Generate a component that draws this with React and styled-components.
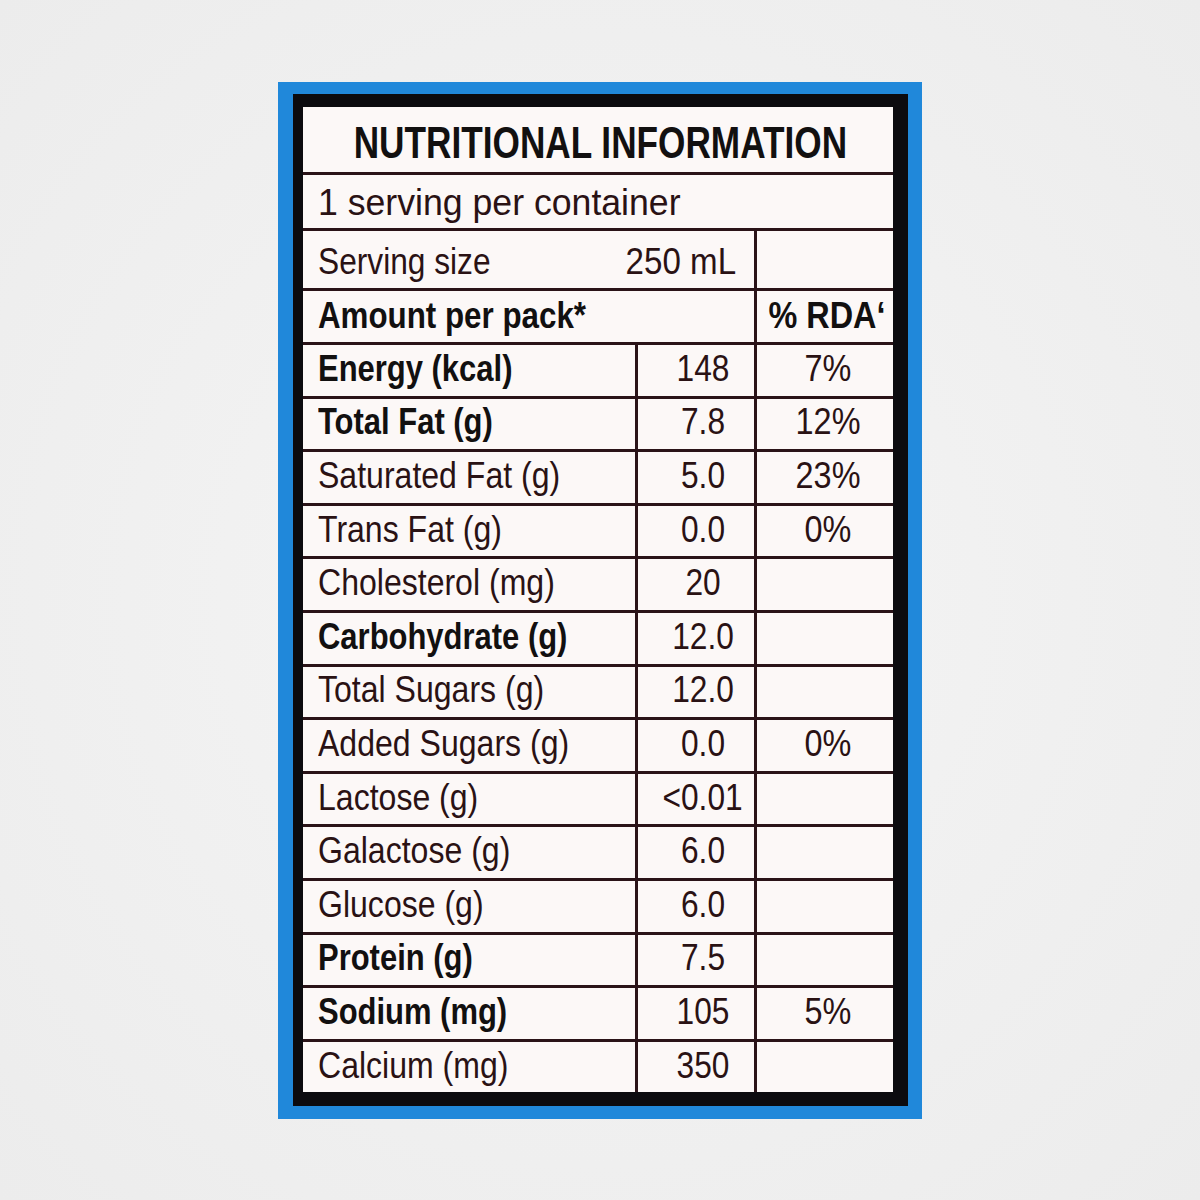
import React from "react";
import styled, { createGlobalStyle } from "styled-components";

const Global = createGlobalStyle`
  html, body { margin: 0; padding: 0; background: #efefef; }
  * { box-sizing: border-box; }
`;

const Page = styled.div`
  width: 1200px;
  height: 1200px;
  display: flex;
  justify-content: center;
  align-items: flex-start;
  padding-top: 82px;
  background: radial-gradient(ellipse at center, #f5f5f5 0%, #ececec 100%);
`;

const Frame = styled.div`
  width: 644px;
  background: #2088da;
  padding: 12px 14px 13px 15px;
`;

const Panel = styled.div`
  background: #0c0b0f;
  padding: 13px 15px 14px 10px;
`;

const Table = styled.div`
  display: grid;
  grid-template-columns: 332px 116px 136px;
  grid-template-rows: 65px 53px 57px 51px repeat(14, 50.6px);
  gap: 3px;
  background: #2a1318;
  font-family: "Liberation Sans", Arial, sans-serif;
  color: #24100f;
`;

const Cell = styled.div`
  background: #fcf8f7;
  display: flex;
  align-items: center;
  justify-content: ${(p) => p.$align || "flex-start"};
  grid-column: ${(p) => p.$span || "auto"};
  padding: ${(p) => p.$pad || "0 0 3px 15px"};
  font-size: ${(p) => p.$size || 36}px;
  font-weight: ${(p) => (p.$bold ? 700 : 400)};
  color: ${(p) => (p.$bold ? "#121010" : "#2a1214")};
  white-space: nowrap;
  overflow: hidden;
  line-height: 1;
`;

const Title = styled(Cell)`
  justify-content: center;
  padding: 6px 0 0 4px;
  font-size: 44px;
  font-weight: 700;
  color: #121010;
`;

const Squeeze = styled.span`
  display: inline-block;
  transform: scaleX(${(p) => p.$sx || 0.88});
  transform-origin: ${(p) => p.$origin || "left"} center;
`;

const rows = [
  ["Energy (kcal)", "148", "7%", true],
  ["Total Fat (g)", "7.8", "12%", true],
  ["Saturated Fat (g)", "5.0", "23%", false],
  ["Trans Fat (g)", "0.0", "0%", false],
  ["Cholesterol (mg)", "20", "", false],
  ["Carbohydrate (g)", "12.0", "", true],
  ["Total Sugars (g)", "12.0", "", false],
  ["Added Sugars (g)", "0.0", "0%", false],
  ["Lactose (g)", "<0.01", "", false],
  ["Galactose (g)", "6.0", "", false],
  ["Glucose (g)", "6.0", "", false],
  ["Protein (g)", "7.5", "", true],
  ["Sodium (mg)", "105", "5%", true],
  ["Calcium (mg)", "350", "", false],
];

export default function App() {
  return (
    <>
      <Global />
      <Page>
        <Frame>
          <Panel>
            <Table>
              <Title $span="1 / 4">
                <Squeeze $sx={0.8} $origin="center">NUTRITIONAL INFORMATION</Squeeze>
              </Title>
              <Cell $span="1 / 4" $pad="3px 0 0 15px">
                <Squeeze $sx={0.99}>1 serving per container</Squeeze>
              </Cell>
              <Cell $span="1 / 3" $align="space-between" $pad="5px 18px 0 15px">
                <Squeeze>Serving size</Squeeze>
                <Squeeze $sx={0.92} $origin="right">250 mL</Squeeze>
              </Cell>
              <Cell />
              <Cell $span="1 / 3" $bold $pad="0 0 1px 15px">
                <Squeeze $sx={0.87}>Amount per pack*</Squeeze>
              </Cell>
              <Cell $bold $align="center" $pad="0 0 1px 4px">
                <Squeeze $sx={0.9} $origin="center">% RDA&#8216;</Squeeze>
              </Cell>
              {rows.map(([label, value, rda, bold]) => (
                <React.Fragment key={label}>
                  <Cell $bold={bold}>
                    <Squeeze $sx={bold ? 0.86 : 0.89}>{label}</Squeeze>
                  </Cell>
                  <Cell $align="center" $pad="0 0 3px 14px">
                    <Squeeze $origin="center">{value}</Squeeze>
                  </Cell>
                  <Cell $align="center" $pad="0 0 3px 6px">
                    <Squeeze $sx={0.9} $origin="center">{rda}</Squeeze>
                  </Cell>
                </React.Fragment>
              ))}
            </Table>
          </Panel>
        </Frame>
      </Page>
    </>
  );
}
